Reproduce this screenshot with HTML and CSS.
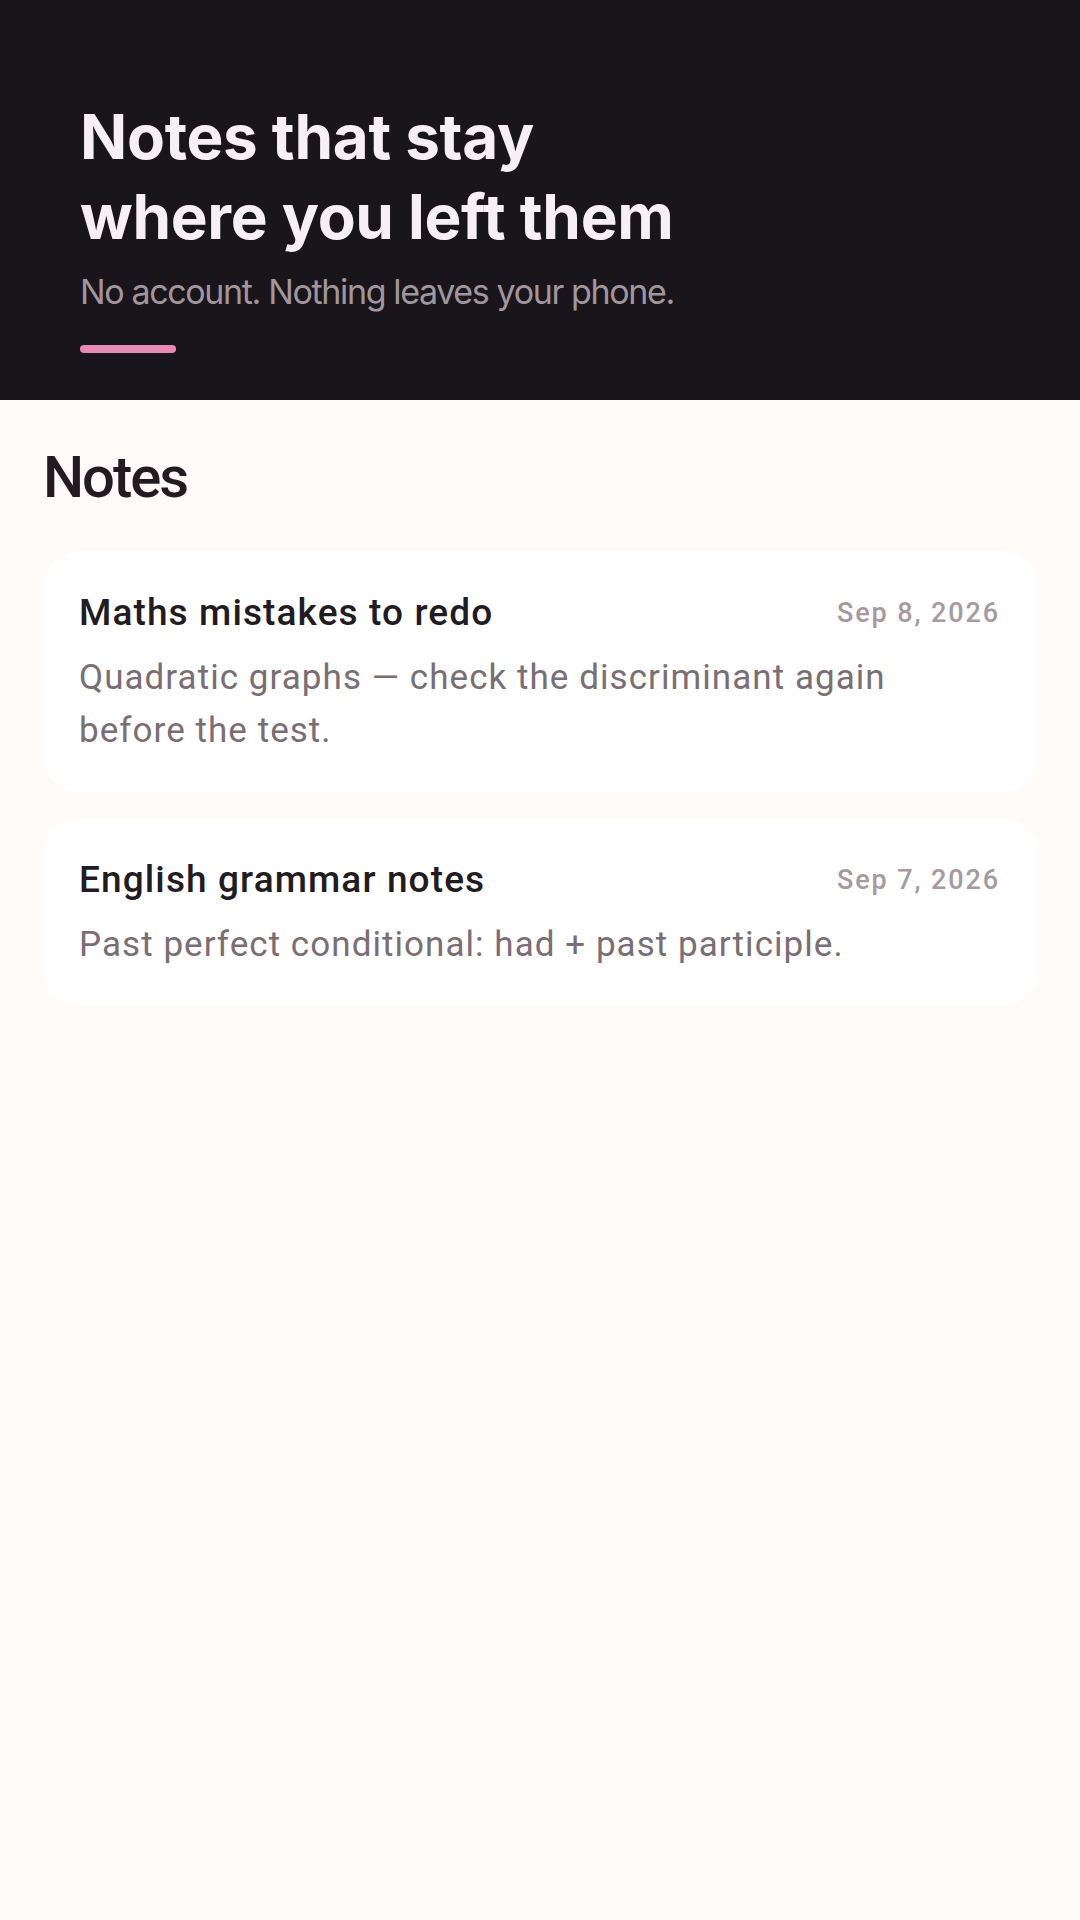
FILE: index.html
```html
<!DOCTYPE html>
<html lang="en">
<head>
<meta charset="utf-8">
<title>Notes</title>
<link rel="stylesheet" href="styles.css">
</head>
<body>
<header class="hero">
  <h1 class="hero-title">Notes that stay<br>where you left them</h1>
  <p class="hero-sub">No account. Nothing leaves your phone.</p>
  <div class="hero-bar"></div>
</header>
<main class="notes">
  <h2 class="notes-heading">Notes</h2>
  <ul class="note-list">
    <li class="note-card">
      <div class="note-head">
        <span class="note-title">Maths mistakes to redo</span>
        <span class="note-date">Sep 8, 2026</span>
      </div>
      <p class="note-body">Quadratic graphs — check the discriminant again before the test.</p>
    </li>
    <li class="note-card">
      <div class="note-head">
        <span class="note-title">English grammar notes</span>
        <span class="note-date">Sep 7, 2026</span>
      </div>
      <p class="note-body">Past perfect conditional: had + past participle.</p>
    </li>
  </ul>
</main>
</body>
</html>
```
FILE: styles.css
```css
* { box-sizing: border-box; }
html, body {
  margin: 0;
  padding: 0;
  background: #fffbf8;
  min-height: 100%;
}
body {
  font-family: Roboto, "Noto Sans", sans-serif;
  width: 1080px;
  min-height: 1920px;
}
.hero {
  background: #18151b;
  padding: 97px 80px 47px 80px;
}
.hero-title {
  margin: 0;
  font-family: Inter, "Noto Sans", sans-serif;
  font-weight: 700;
  font-size: 62px;
  line-height: 80px;
  color: #f6eff3;
  letter-spacing: -0.005em;
}
.hero-sub {
  margin: 13px 0 0 0;
  font-family: Inter, "Noto Sans", sans-serif;
  font-weight: 400;
  font-size: 34px;
  line-height: 44px;
  letter-spacing: -0.04em;
  color: #a2969d;
}
.hero-bar {
  margin-top: 31px;
  width: 96px;
  height: 8px;
  border-radius: 4px;
  background: #e589b4;
}
.notes {
  padding: 42px 42px 0 43px;
}
.notes-heading {
  margin: 0;
  font-family: Roboto, "Noto Sans", sans-serif;
  font-weight: 500;
  font-size: 58px;
  line-height: 70px;
  letter-spacing: -0.035em;
  color: #221b22;
}
.note-list {
  list-style: none;
  margin: 39px 0 0 0;
  padding: 0;
  display: flex;
  flex-direction: column;
  gap: 26px;
}
.note-card {
  background: #ffffff;
  border-radius: 36px;
  padding: 40px 38px 35px 36px;
}
.note-head {
  display: flex;
  justify-content: space-between;
  align-items: center;
  gap: 24px;
}
.note-title {
  font-weight: 500;
  font-size: 37px;
  line-height: 44px;
  letter-spacing: 0.03em;
  color: #221b22;
}
.note-date {
  font-weight: 500;
  font-size: 27px;
  line-height: 34px;
  letter-spacing: 0.07em;
  color: #a59aa0;
  white-space: nowrap;
}
.note-body {
  margin: 16px 0 0 0;
  font-weight: 400;
  font-size: 35px;
  line-height: 53px;
  letter-spacing: 0.03em;
  color: #7a6e74;
}
```
